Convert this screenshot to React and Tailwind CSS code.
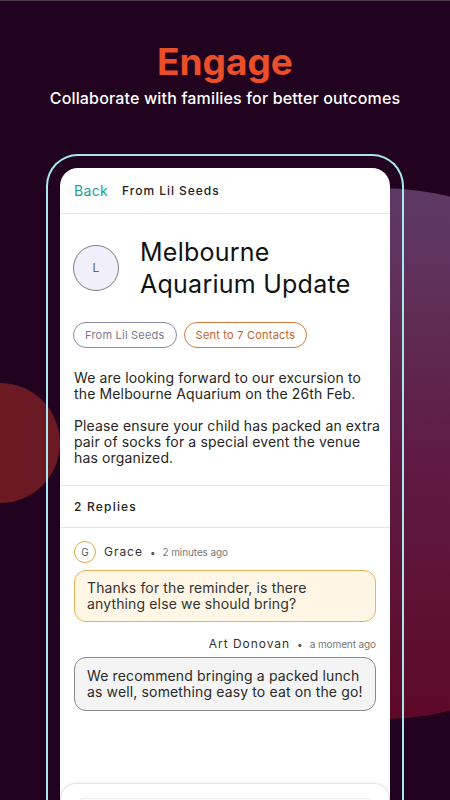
import React from 'react';

const Chip = ({ children, className }) => (
  <span className={`inline-flex h-[26px] items-center rounded-full border px-[11px] text-[11px] tracking-[0.02em] ${className}`}>
    {children}
  </span>
);

const App = () => {
  return (
    <div className="relative h-[800px] w-[450px] overflow-hidden bg-[#22031f] font-['Inter',sans-serif]">
      {/* background decoration */}
      <div className="absolute left-0 top-0 h-px w-full bg-[#4d3d4b]" />
      <div className="absolute left-[80px] top-[189px] h-[531px] w-[520px] -rotate-1 rounded-[220px/160px] bg-gradient-to-b from-[#5e3a66] via-[#5f1a44] to-[#5d0826]" />
      <div className="absolute left-[-60px] top-[383px] h-[120px] w-[120px] rounded-full bg-[#6b1a23]" />

      <div className="relative flex flex-col items-center">
        <h1 className="mt-[43px] text-[37px] font-bold leading-none text-[#ea4f2a]">Engage</h1>
        <p className="mt-2 text-[16px] font-medium leading-5 tracking-[0.01em] text-white">
          Collaborate with families for better outcomes
        </p>

        {/* phone frame */}
        <div className="mt-[46px] h-[660px] w-[358px] rounded-t-[32px] border-2 border-b-0 border-[#a9e6ee] px-3 pt-3">
          <div className="h-full rounded-t-[18px] bg-white text-[#1c1c1c]">
            {/* header */}
            <div className="flex h-[46px] items-center gap-[14px] border-b border-[#e6e6e6] px-[14px]">
              <span className="text-[14px] tracking-wide text-[#1d9d94]">Back</span>
              <span className="text-[12px] font-medium tracking-[0.08em] text-[#222]">From Lil Seeds</span>
            </div>

            {/* message */}
            <div className="border-b border-[#e6e6e6] px-[13px] pb-[19px] pt-[22px]">
              <div className="flex items-center gap-[21px]">
                <div className="flex h-[46px] w-[46px] shrink-0 items-center justify-center rounded-full border border-[#7d7d85] bg-[#f1effa] text-[12px] text-[#666]">
                  L
                </div>
                <h2 className="whitespace-nowrap text-[25px] font-normal leading-8 tracking-[0.01em] text-[#111]">
                  Melbourne
                  <br />
                  Aquarium Update
                </h2>
              </div>

              <div className="mt-[22px] flex gap-[7px]">
                <Chip className="border-[#8c88a8] text-[#7d7b8c]">From Lil Seeds</Chip>
                <Chip className="border-[#d7793e] text-[#c0622d]">Sent to 7 Contacts</Chip>
              </div>

              <div className="mt-[22px] whitespace-nowrap pl-px text-[14px] leading-4 tracking-[0.01em] text-[#262626]">
                <p>
                  We are looking forward to our excursion to
                  <br />
                  the Melbourne Aquarium on the 26th Feb.
                </p>
                <p className="mt-4">
                  Please ensure your child has packed an extra
                  <br />
                  pair of socks for a special event the venue
                  <br />
                  has organized.
                </p>
              </div>
            </div>

            {/* replies */}
            <div className="flex h-[42px] items-center border-b border-[#e6e6e6] px-[14px] text-[12px] font-medium tracking-[0.1em] text-[#222]">
              2 Replies
            </div>

            <div className="px-[14px] pt-[13px]">
              <div className="flex h-[22px] items-center">
                <div className="flex h-[22px] w-[22px] items-center justify-center rounded-full border border-[#e0a84a] text-[10px] text-[#555]">
                  G
                </div>
                <span className="ml-2 text-[12px] tracking-[0.08em] text-[#333]">Grace</span>
                <span className="ml-[7px] text-[10px] text-[#555]">•</span>
                <span className="ml-[7px] text-[10px] tracking-[-0.01em] text-[#777]">2 minutes ago</span>
              </div>
              <div className="mt-[7px] whitespace-nowrap rounded-xl border border-[#e6b55a] bg-[#fff6e6] px-3 py-[9px] text-[14px] leading-4 tracking-[0.01em] text-[#333]">
                Thanks for the reminder, is there
                <br />
                anything else we should bring?
              </div>

              <div className="mt-[14px] flex h-4 items-center justify-end">
                <span className="text-[12px] tracking-[0.08em] text-[#333]">Art Donovan</span>
                <span className="ml-[7px] text-[10px] text-[#555]">•</span>
                <span className="ml-[7px] text-[10px] tracking-[-0.01em] text-[#777]">a moment ago</span>
              </div>
              <div className="mt-[5px] whitespace-nowrap rounded-xl border border-[#8a8a8a] bg-[#f4f4f4] px-3 py-[10px] text-[14px] leading-4 tracking-[0.01em] text-[#2a2a2a]">
                We recommend bringing a packed lunch
                <br />
                as well, something easy to eat on the go!
              </div>
            </div>

            {/* compose bar */}
            <div className="mt-[72px] h-[40px] rounded-t-2xl border border-b-0 border-[#e4e4e4] px-[15px] pt-[14px] shadow-[0_-1px_3px_rgba(0,0,0,0.05)]">
              <div className="h-full rounded-t-lg border border-b-0 border-[#ececec]" />
            </div>
          </div>
        </div>
      </div>
    </div>
  );
};

export default App;
